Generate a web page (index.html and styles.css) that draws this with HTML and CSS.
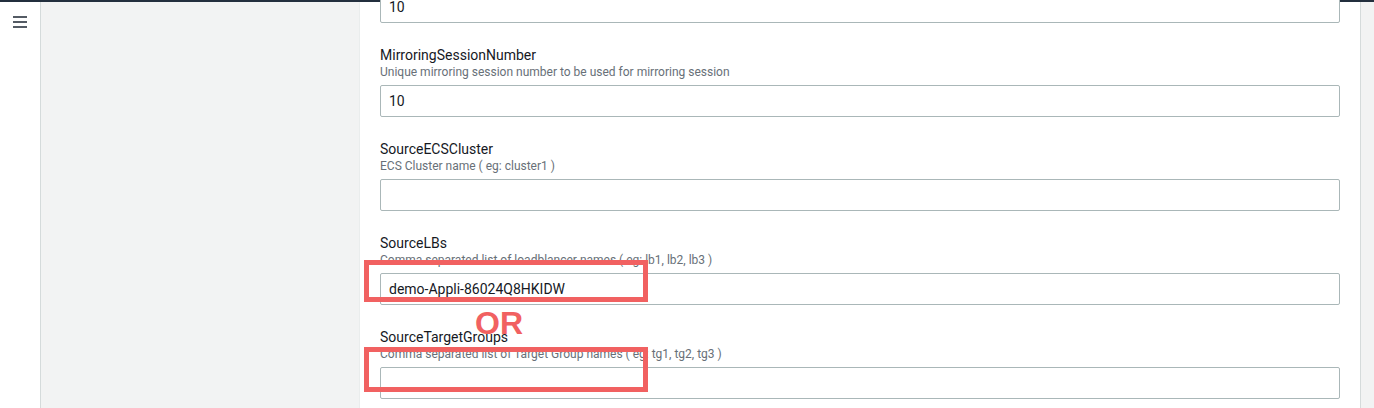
FILE: index.html
```html
<!DOCTYPE html>
<html>
<head>
<meta charset="utf-8">
<link rel="stylesheet" href="styles.css">
</head>
<body>
<div class="topbar"></div>
<div class="layout">
  <nav class="sidenav">
    <button class="hamburger" aria-label="Open navigation">
      <span></span><span></span><span></span>
    </button>
  </nav>
  <aside class="steps"></aside>
  <main class="panel">
    <div class="field field-first">
      <input class="input" type="text" value="10">
    </div>
    <div class="field">
      <label class="label">MirroringSessionNumber</label>
      <div class="hint">Unique mirroring session number to be used for mirroring session</div>
      <input class="input" type="text" value="10">
    </div>
    <div class="field">
      <label class="label">SourceECSCluster</label>
      <div class="hint">ECS Cluster name ( eg: cluster1 )</div>
      <input class="input" type="text" value="">
    </div>
    <div class="field">
      <label class="label">SourceLBs</label>
      <div class="hint">Comma separated list of loadblancer names ( eg: lb1, lb2, lb3 )</div>
      <input class="input" type="text" value="demo-Appli-86024Q8HKIDW">
    </div>
    <div class="field">
      <label class="label">SourceTargetGroups</label>
      <div class="hint">Comma separated list of Target Group names ( eg: tg1, tg2, tg3 )</div>
      <input class="input" type="text" value="">
    </div>
    <div class="mark mark-lbs"></div>
    <div class="mark-or">OR</div>
    <div class="mark mark-tg"></div>
  </main>
  <div class="filler"></div>
</div>
</body>
</html>
```

FILE: styles.css
```css
html, body {
  margin: 0;
  padding: 0;
  height: 408px;
  overflow: hidden;
  background: #ffffff;
  font-family: Roboto, "Liberation Sans", Arial, sans-serif;
  color: #16191f;
}

.topbar {
  height: 2px;
  background: #232f3e;
}

.layout {
  display: flex;
  height: 406px;
}

.sidenav {
  width: 40px;
  flex: 0 0 40px;
  background: #ffffff;
  border-right: 1px solid #d5dbdb;
  box-sizing: content-box;
}

.hamburger {
  display: flex;
  flex-direction: column;
  gap: 3px;
  margin: 14px 0 0 13px;
  padding: 0;
  border: 0;
  background: none;
  width: 14px;
}

.hamburger span {
  display: block;
  height: 2px;
  width: 14px;
  background: #545b64;
}

.steps {
  flex: 0 0 318px;
  background: #f2f3f3;
}

.panel {
  position: relative;
  background: #ffffff;
  border-left: 1px solid #eaeded;
  border-right: 1px solid #d5dbdb;
  padding: 0 20px;
  box-sizing: border-box;
  flex: 0 0 1002px;
}

.filler {
  flex: 1 1 auto;
  background: #f2f3f3;
}

.field {
  display: flex;
  flex-direction: column;
  margin-bottom: 21px;
}

.field-first {
  margin-top: -11px;
}

.label {
  font-size: 14px;
  line-height: 20px;
  font-weight: 400;
  color: #16191f;
  padding-top: 1px;
  margin-bottom: -1px;
}

.hint {
  font-size: 12px;
  line-height: 16px;
  color: #687078;
  margin-bottom: 5px;
}

.input {
  display: block;
  box-sizing: border-box;
  width: 960px;
  height: 32px;
  margin: 0;
  padding: 0 8px;
  border: 1px solid #aab7b8;
  border-radius: 2px;
  background: #ffffff;
  font-family: Roboto, "Liberation Sans", Arial, sans-serif;
  font-size: 14px;
  color: #16191f;
  outline: none;
}

.mark {
  position: absolute;
  left: 4px;
  width: 284px;
  border: 5px solid #f16161;
  box-sizing: border-box;
}

.mark-lbs {
  top: 258px;
  height: 42px;
}

.mark-tg {
  top: 345px;
  height: 45px;
}

.mark-or {
  position: absolute;
  left: 115px;
  top: 301px;
  font-family: "Liberation Sans", Arial, sans-serif;
  font-weight: 700;
  font-size: 32px;
  line-height: 40px;
  color: #f16161;
}
```
